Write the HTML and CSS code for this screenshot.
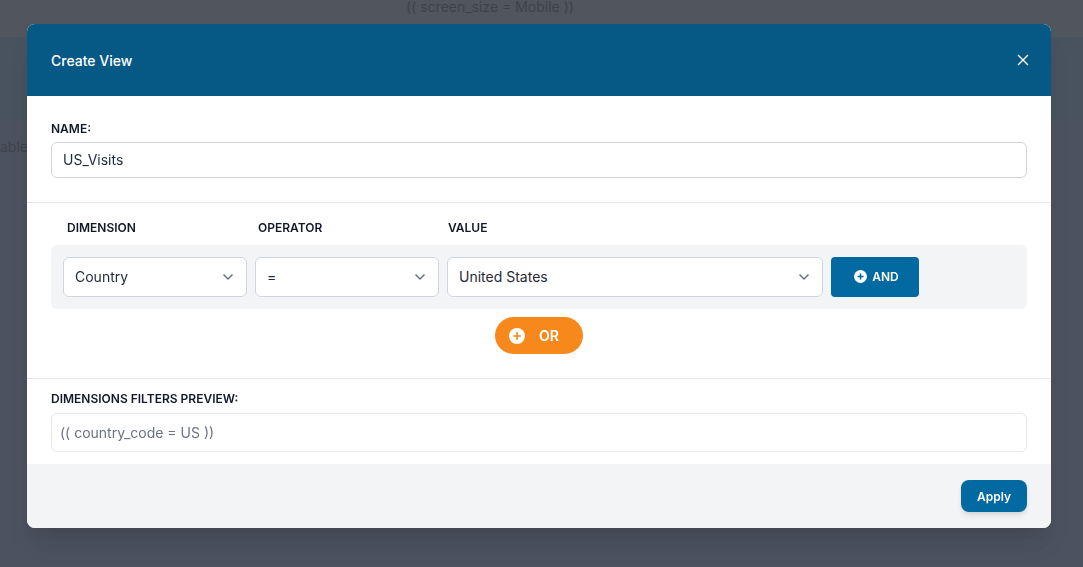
FILE: index.html
```html
<!DOCTYPE html>
<html lang="en">
<head>
    <meta charset="UTF-8">
    <meta name="viewport" content="width=device-width, initial-scale=1.0">
    <title>Create View</title>
    <link rel="stylesheet" href="styles.css">
</head>
<body>
    <div class="page">
        <div class="page-top">(( screen_size = Mobile ))</div>
        <div class="page-band"></div>
        <div class="page-main">able</div>
    </div>
    <div class="overlay"></div>
    <div class="modal">
        <div class="modal-header">
            <h2>Create View</h2>
            <svg class="close-icon" width="12" height="12" viewBox="0 0 12 12"><path d="M1 1L11 11M11 1L1 11" stroke="#fff" stroke-width="1.4" fill="none"/></svg>
        </div>
        <div class="name-section">
            <label class="field-label">NAME:</label>
            <div class="text-input">US_Visits</div>
        </div>
        <div class="filter-section">
            <div class="filter-heads">
                <span class="head-dimension">DIMENSION</span>
                <span class="head-operator">OPERATOR</span>
                <span>VALUE</span>
            </div>
            <div class="filter-row">
                <div class="select select-dimension">Country
                    <svg class="chevron" width="12" height="8" viewBox="0 0 12 8"><path d="M1.5 1.5L6 6L10.5 1.5" stroke="#6b7280" stroke-width="1.5" fill="none"/></svg>
                </div>
                <div class="select select-operator">=
                    <svg class="chevron" width="12" height="8" viewBox="0 0 12 8"><path d="M1.5 1.5L6 6L10.5 1.5" stroke="#6b7280" stroke-width="1.5" fill="none"/></svg>
                </div>
                <div class="select select-value">United States
                    <svg class="chevron" width="12" height="8" viewBox="0 0 12 8"><path d="M1.5 1.5L6 6L10.5 1.5" stroke="#6b7280" stroke-width="1.5" fill="none"/></svg>
                </div>
                <button class="and-btn">
                    <svg width="13" height="13" viewBox="0 0 16 16"><circle cx="8" cy="8" r="8" fill="#fff"/><path d="M8 4.2V11.8M4.2 8H11.8" stroke="#0369a1" stroke-width="2"/></svg>
                    AND
                </button>
            </div>
            <div class="or-wrap">
                <button class="or-btn">
                    <svg width="16" height="16" viewBox="0 0 16 16"><circle cx="8" cy="8" r="8" fill="#fff"/><path d="M8 4.2V11.8M4.2 8H11.8" stroke="#f7891c" stroke-width="1.7"/></svg>
                    OR
                </button>
            </div>
        </div>
        <div class="preview-section">
            <label class="field-label">DIMENSIONS FILTERS PREVIEW:</label>
            <div class="preview-box">(( country_code = US ))</div>
        </div>
        <div class="modal-footer">
            <button class="apply-btn">Apply</button>
        </div>
    </div>
</body>
</html>
```

FILE: styles.css
```css
* {
    box-sizing: border-box;
}
html, body {
    margin: 0;
    height: 100%;
    overflow: hidden;
}
body {
    font-family: Inter, sans-serif;
    background-color: #f3f4f6;
    color: #111827;
}
.page-top {
    height: 37px;
    padding-right: 103px;
    font-size: 14px;
    line-height: 14px;
    text-align: center;
    color: #5a4632;
    background-color: #b4a591;
}
.page-band {
    height: 83px;
    background-color: #919b9b;
}
.page-main {
    height: 447px;
    padding-top: 18px;
    font-size: 14px;
    color: #5a4632;
    background-color: #a0969a;
}
.overlay {
    position: fixed;
    inset: 0;
    background-color: rgba(55, 65, 81, 0.8);
}
.modal {
    position: fixed;
    left: 27px;
    top: 24px;
    width: 1024px;
    height: 504px;
    display: flex;
    flex-direction: column;
    background-color: #fff;
    border-radius: 8px;
    overflow: hidden;
    box-shadow: 0 20px 25px -5px rgba(0,0,0,0.1), 0 10px 10px -5px rgba(0,0,0,0.04);
}
.modal-header {
    height: 72px;
    flex: none;
    display: flex;
    align-items: center;
    justify-content: space-between;
    padding: 0 22px 0 24px;
    background-color: #075985;
}
.modal-header h2 {
    margin: 0;
    font-size: 14px;
    line-height: 20px;
    padding-top: 1px;
    font-weight: 500;
    color: #fff;
}
.field-label {
    display: block;
    font-size: 12px;
    line-height: 16px;
    font-weight: 600;
    color: #111827;
}
.name-section {
    height: 107px;
    flex: none;
    padding: 25px 24px 0;
    border-bottom: 1px solid #e5e7eb;
}
.text-input {
    height: 36px;
    margin-top: 5px;
    padding: 0 11px;
    font-size: 14px;
    line-height: 34px;
    color: #1f2937;
    border: 1px solid #d1d5db;
    border-radius: 6px;
}
.filter-section {
    height: 176px;
    flex: none;
    padding: 0 24px;
    border-bottom: 1px solid #e5e7eb;
}
.filter-heads {
    display: flex;
    padding: 17px 0 0 16px;
    height: 42px;
    font-size: 12px;
    line-height: 16px;
    font-weight: 600;
    color: #111827;
}
.head-dimension {
    width: 191px;
}
.head-operator {
    width: 190px;
}
.filter-row {
    height: 64px;
    display: flex;
    align-items: center;
    gap: 8px;
    padding: 0 12px;
    background-color: #f3f4f6;
    border-radius: 6px;
}
.select {
    height: 40px;
    display: flex;
    align-items: center;
    justify-content: space-between;
    padding: 0 12px 2px 11px;
    font-size: 14px;
    color: #1f2937;
    background-color: #fff;
    border: 1px solid #d1d5db;
    border-radius: 6px;
}
.chevron {
    margin-top: 2px;
}
.select-dimension, .select-operator {
    width: 184px;
}
.select-value {
    width: 376px;
}
.and-btn {
    width: 88px;
    height: 40px;
    display: flex;
    align-items: center;
    justify-content: center;
    gap: 5px;
    padding: 0 0 2px 3px;
    font-family: Inter, sans-serif;
    font-size: 12px;
    font-weight: 600;
    color: #fff;
    background-color: #0369a1;
    border: none;
    border-radius: 4px;
}
.or-wrap {
    display: flex;
    justify-content: center;
    margin-top: 8px;
}
.or-btn {
    width: 88px;
    height: 37px;
    display: flex;
    align-items: center;
    justify-content: center;
    gap: 14px;
    padding: 0 10px 0 0;
    font-family: Inter, sans-serif;
    font-size: 14px;
    font-weight: 600;
    color: #fff;
    background-color: #f7891c;
    border: none;
    border-radius: 19px;
}
.preview-section {
    height: 85px;
    flex: none;
    padding: 12px 24px 0;
}
.preview-box {
    height: 39px;
    margin-top: 6px;
    padding: 0 8px;
    font-size: 14px;
    line-height: 37px;
    color: #6b7280;
    border: 1px solid #e5e7eb;
    border-radius: 6px;
}
.modal-footer {
    flex: 1;
    display: flex;
    justify-content: flex-end;
    align-items: center;
    padding: 0 24px;
    background-color: #f3f4f6;
}
.apply-btn {
    width: 66px;
    height: 32px;
    font-family: Inter, sans-serif;
    font-size: 12px;
    font-weight: 600;
    color: #fff;
    background-color: #0369a1;
    border: none;
    border-radius: 8px;
    box-shadow: 0 4px 6px -1px rgba(0,0,0,0.1), 0 2px 4px -1px rgba(0,0,0,0.06);
}
```
